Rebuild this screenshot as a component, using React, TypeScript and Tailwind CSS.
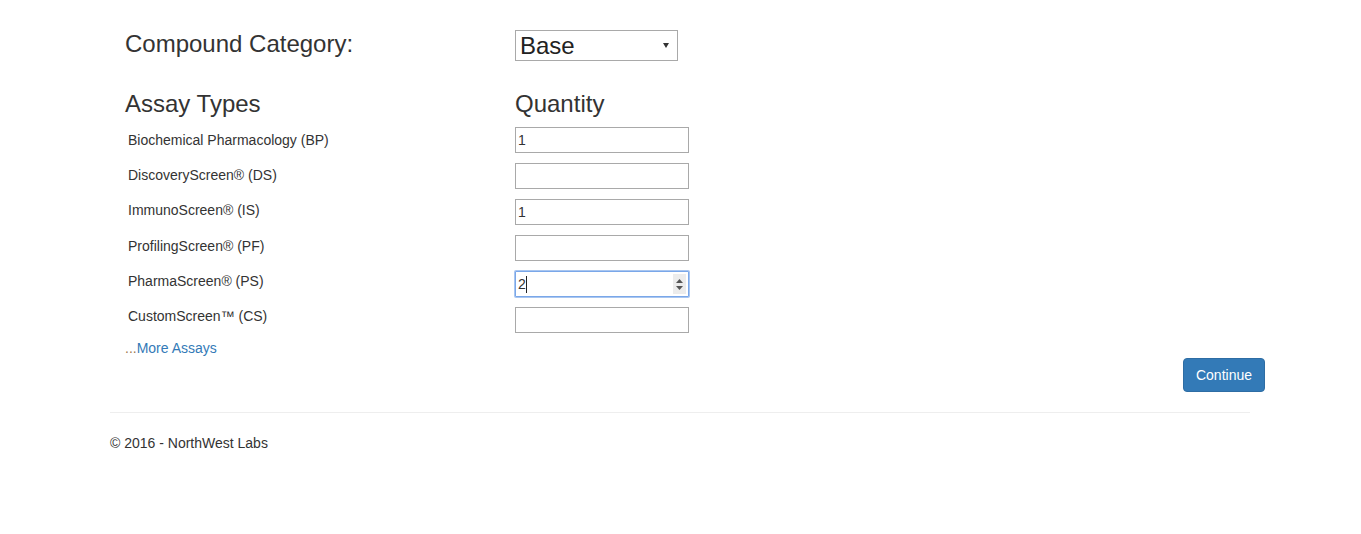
import React from 'react';

const assays = [
  { label: 'Biochemical Pharmacology (BP)', value: '1' },
  { label: 'DiscoveryScreen® (DS)', value: '' },
  { label: 'ImmunoScreen® (IS)', value: '1' },
  { label: 'ProfilingScreen® (PF)', value: '' },
  { label: 'PharmaScreen® (PS)', value: '2', focused: true },
  { label: 'CustomScreen™ (CS)', value: '' },
];

const QtyInput: React.FC<{ value: string; focused?: boolean }> = ({ value, focused }) => {
  if (focused) {
    return (
      <div className="relative w-[174px] h-[26px] border border-[#7aa7e9] rounded-[1px] shadow-[0_0_0_1px_#a9c6f0] bg-white flex items-center pl-[2px] text-[14px] text-[#333]">
        <span>{value}</span>
        <span className="inline-block w-px h-[17px] bg-[#222]" />
        <div className="absolute right-[2px] top-[2px] w-[13px] h-[20px] bg-[#ececec] flex flex-col items-center justify-center gap-[3px]">
          <svg width="7" height="4" viewBox="0 0 7 4"><path d="M0 4 L3.5 0 L7 4 Z" fill="#555" /></svg>
          <svg width="7" height="4" viewBox="0 0 7 4"><path d="M0 0 L3.5 4 L7 0 Z" fill="#555" /></svg>
        </div>
      </div>
    );
  }
  return (
    <input
      readOnly
      value={value}
      className="w-[174px] h-[26px] border border-[#a9a9a9] px-[2px] text-[14px] text-[#333] outline-none bg-white"
    />
  );
};

export default function App() {
  return (
    <div className="w-full min-h-[534px] bg-white text-[#333]" style={{ fontFamily: '"Liberation Sans", Arial, sans-serif' }}>
      <div className="w-[1140px] ml-[110px]">
        <div className="pl-[15px] pt-[30px]">
          <div className="flex items-center h-[31px]">
            <div className="w-[390px] text-[24px] leading-[26px] -mt-[3px]">Compound Category:</div>
            <div className="relative w-[163px] h-[31px]">
              <select className="appearance-none w-full h-full border border-[#a9a9a9] bg-white pl-[4px] text-[24px] leading-[28px] text-[#222] outline-none">
                <option>Base</option>
              </select>
              <svg className="absolute right-[9px] top-[13px]" width="6" height="5" viewBox="0 0 6 5">
                <path d="M0 0 L6 0 L3 5 Z" fill="#333" />
              </svg>
            </div>
          </div>

          <div className="flex items-center mt-[30px] h-[26px]">
            <div className="w-[390px] text-[24px] leading-[26px]">Assay Types</div>
            <div className="text-[24px] leading-[26px]">Quantity</div>
          </div>

          <div className="flex mt-[10px]">
            <div className="w-[390px] pl-[3px] pt-[3px] flex flex-col gap-[15.2px]">
              {assays.map((a) => (
                <div key={a.label} className="h-[20px] text-[14px] leading-[20px]">{a.label}</div>
              ))}
            </div>
            <div className="flex flex-col gap-[10px]">
              {assays.map((a) => (
                <QtyInput key={a.label} value={a.value} focused={a.focused} />
              ))}
            </div>
          </div>

          <div className="mt-[5px] text-[14px] leading-[20px]">
            <a href="#" className="no-underline">
              <span className="text-[#a0784f]">...</span>
              <span className="text-[#337ab7]">More Assays</span>
            </a>
          </div>
        </div>

        <div className="flex justify-end -mr-[15px]">
          <button className="h-[34px] px-[12px] bg-[#337ab7] border border-[#2e6da4] rounded-[4px] text-white text-[14px]">
            Continue
          </button>
        </div>

        <hr className="mt-[20px] border-0 border-t border-[#eee]" />

        <footer className="pt-[20px] text-[14px] leading-[20px]">
          <p>© 2016 - NorthWest Labs</p>
        </footer>
      </div>
    </div>
  );
}
